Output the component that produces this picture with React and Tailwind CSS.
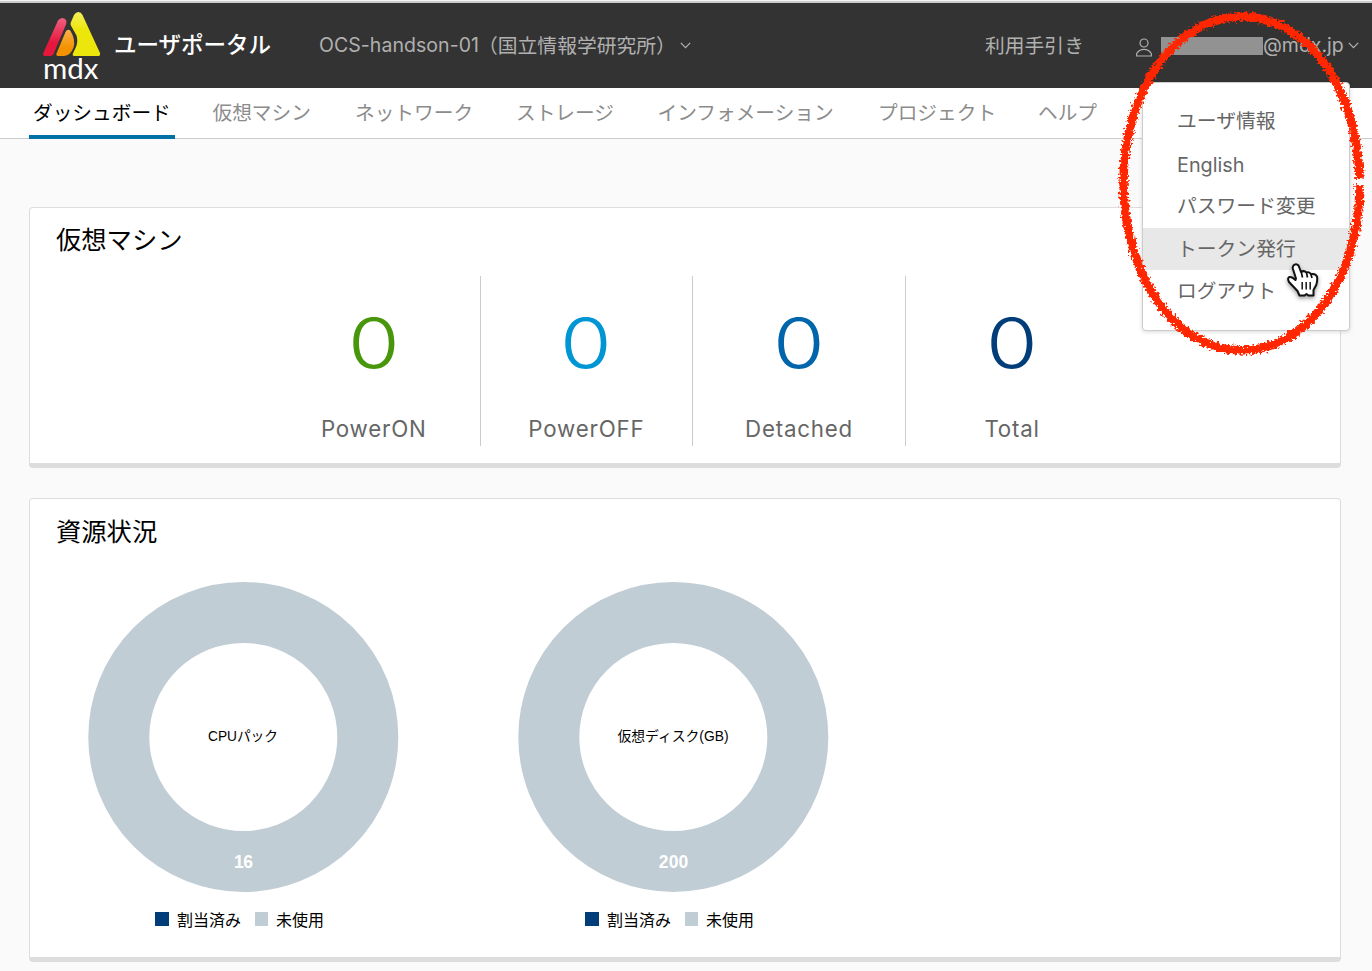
import React from "react";

const TABS = [
  { label: "仮想マシン", w: "w-[98.5px]" },
  { label: "ネットワーク", w: "w-[117px]" },
  { label: "ストレージ", w: "w-[97.5px]" },
  { label: "インフォメーション", w: "w-[176.5px]" },
  { label: "プロジェクト", w: "w-[116px]" },
  { label: "ヘルプ", w: "w-[59px]" },
];

const STATS = [
  { label: "PowerON", color: "text-[#48960c]" },
  { label: "PowerOFF", color: "text-[#0095d3]" },
  { label: "Detached", color: "text-[#0065ab]" },
  { label: "Total", color: "text-[#003d79]" },
];

const MENU = ["ユーザ情報", "English", "パスワード変更", "トークン発行", "ログアウト"];

function Logo() {
  return (
    <svg className="h-[85px] w-[60px] shrink-0" viewBox="0 3 60 85">
      <defs>
        <linearGradient id="lr" x1="0" y1="0" x2="0" y2="1">
          <stop offset="0" stopColor="#f0617f" />
          <stop offset="0.65" stopColor="#e6173d" />
        </linearGradient>
        <linearGradient id="lo" x1="0" y1="0" x2="0" y2="1">
          <stop offset="0" stopColor="#f8b04c" />
          <stop offset="0.7" stopColor="#f39200" />
        </linearGradient>
        <linearGradient id="ly" x1="0" y1="0" x2="0" y2="1">
          <stop offset="0" stopColor="#f4ee5c" />
          <stop offset="0.4" stopColor="#ede60c" />
        </linearGradient>
      </defs>
      <g transform="translate(0 3)">
        <path d="M16 17.500 Q18 14.800 20.500 15 Q25.500 15.800 24.200 21 L11.500 51 Q10.500 53 8.500 53 H3 Q.3 52.600 1.500 49.500 Z" fill="url(#lr)" />
        <path d="M23.500 29 Q25.500 25.500 28.300 27.600 Q34 37 31.500 44.500 Q28.500 52.500 22 53 H16 Q13.700 52.500 14.500 50.500 Z" fill="url(#lo)" />
        <path d="M32 12 Q34 9 36.300 9 Q39 9.200 40.500 12 L58 50 Q58.500 52.800 56.500 53 H32 Q30 52.800 30.800 50.800 L34 44 Q36.400 38.500 34.500 32.500 L28.900 22.500 Q28.300 21 28.800 19.500 Z" fill="url(#ly)" />
      </g>
      <text x="1" y="79" textLength="55.500" lengthAdjust="spacingAndGlyphs" className="fill-white font-['Lato',sans-serif] text-[29.5px]">mdx</text>
    </svg>
  );
}

function Chevron() {
  return (
    <svg className="mb-px h-[7px] w-[11px] shrink-0" viewBox="0 0 11 7" fill="none" stroke="#b0b0b0" strokeWidth="1.300">
      <path d="M.8 .9 5.500 5.600 10.200 .9" />
    </svg>
  );
}

function Donut({ title, value, titleWidth, valueWidth }) {
  return (
    <div className="flex w-[430px] flex-col items-center">
      <svg className="h-[312px] w-[312px]" viewBox="0 0 312 312">
        <circle cx="156.300" cy="156" r="124.500" fill="none" stroke="#c1cdd4" strokeWidth="61" />
        <text x="156" y="160" textAnchor="middle" textLength={titleWidth} lengthAdjust="spacingAndGlyphs" className="fill-black font-['Liberation_Sans','Noto_Sans_CJK_JP',sans-serif] text-[14px]">{title}</text>
        <text x="156.500" y="287" textAnchor="middle" textLength={valueWidth} className="fill-white font-['Liberation_Sans',sans-serif] text-[17.5px] font-bold">{value}</text>
      </svg>
      <div className="mt-[14px] flex h-6 items-center pr-[7px] font-['Noto_Sans_CJK_JP',sans-serif] text-[16px] text-black">
        <span className="mr-[8px] h-[14px] w-[14px] bg-[#003d79]" />
        <span className="mr-[14px] leading-6">割当済み</span>
        <span className="mr-2 h-[14px] w-[13px] bg-[#c1cdd4]" />
        <span className="leading-6">未使用</span>
      </div>
    </div>
  );
}

function HandCursor() {
  return (
    <svg className="absolute top-[260px] left-[1284px] h-[40px] w-[38px] drop-shadow-[0_2px_2px_rgba(0,0,0,0.4)]" viewBox="0 0 38 40">
      <path d="M9.500 5.500 Q12 2.800 14.500 5.500 L17 12 Q20 10 22.500 12.500 Q25.500 11.500 27 14.200 Q31 13 33 16.500 Q33.800 20 32.200 25 L29.500 30 V35.500 H24.500 L22.500 34 L20.500 35.500 H15.500 L13.500 31 L5 22 Q3 18 5.500 17 Q8 16.500 11.500 20 L12 18.500 L8.800 8.500 Q8.500 6.800 9.500 5.500 Z" fill="#fff" stroke="#111" strokeWidth="2" strokeLinejoin="round" />
      <path d="M17.300 12 18.500 17.500 M22.500 13 23.500 17.500 M27 14.500 28 18" stroke="#111" strokeWidth="1.700" />
      <path d="M18.200 22V29.500 M22.200 22V29.500 M26.200 22V29.500" stroke="#222" strokeWidth="1.600" />
    </svg>
  );
}

function Highlight() {
  return (
    <svg className="pointer-events-none absolute top-0 left-[1100px] h-[370px] w-[272px]" viewBox="1100 0 272 370">
      <defs>
        <filter id="crayon" x="-5%" y="-5%" width="110%" height="110%">
          <feTurbulence type="fractalNoise" baseFrequency="0.4" numOctaves="3" seed="4" result="n" />
          <feDisplacementMap in="SourceGraphic" in2="n" scale="8" xChannelSelector="R" yChannelSelector="G" result="d" />
          <feGaussianBlur in="d" stdDeviation="0.4" />
        </filter>
      </defs>
      <path d="M1359.500 179 C1357 85 1306 16.500 1241 16.500 C1176 16.500 1123.500 91 1123.500 182 C1123.500 276 1176 350.500 1241 350.500 C1306 350.500 1360 280 1359.500 185" fill="none" stroke="#ff2600" strokeWidth="8.500" filter="url(#crayon)" />
    </svg>
  );
}

export default function App() {
  return (
    <div className="relative flex h-[971px] w-[1372px] flex-col overflow-hidden bg-[#fafafa] font-['Lato','Noto_Sans_CJK_JP',sans-serif]">
      <div className="h-[3px] shrink-0 border-b-2 border-[#ccc] bg-[#f5f5f5]" />
      <header className="flex h-[85px] shrink-0 items-center bg-[#333] pl-[42px] text-[#b0b0b0]">
        <Logo />
        <div className="mb-[2px] ml-[12px] w-[158px] text-[22.5px] leading-8 font-medium whitespace-nowrap text-white">ユーザポータル</div>
        <div className="mb-[2px] ml-[47px] flex w-[361px] items-center text-[19.8px] leading-8 whitespace-nowrap">
          <span className="w-[159px] pt-px font-['Inter',sans-serif] text-[19.5px] tracking-[0.05px]">OCS-handson-01</span>
          <span>（国立情報学研究所）</span>
        </div>
        <Chevron />
        <div className="mb-[2px] ml-[294px] w-[151px] text-[19.8px] leading-8">利用手引き</div>
        <svg className="mt-[4px] h-[19px] w-[16px]" viewBox="0 0 16 19" fill="none" stroke="#b0b0b0" strokeWidth="1.200">
          <circle cx="8" cy="5" r="4" />
          <path d="M.7 18V15.500Q3 11.300 8 11.300T15.300 15.500V18Z" />
        </svg>
        <div className="ml-[9px] h-[18px] w-[102px] bg-[#929292]" />
        <div className="mb-px w-[85px] font-['Inter',sans-serif] text-[19.5px] leading-8 tracking-[0px]">@mdx.jp</div>
        <Chevron />
      </header>
      <nav className="flex h-[51px] shrink-0 border-b border-[#ccc] bg-white pl-[29px] text-[19.7px] leading-[50px] whitespace-nowrap text-[#8c8c8c]">
        <div className="mr-[37.5px] h-[51px] w-[146px] border-b-4 border-[#0072a3] pl-1 text-black">ダッシュボード</div>
        <div className="flex gap-[44px]">
          {TABS.map((t) => (
            <div key={t.label} className={t.w}>{t.label}</div>
          ))}
        </div>
      </nav>
      <main className="flex flex-col gap-[30px] pt-[68px] pr-[31px] pl-[29px]">
        <section className="flex h-[261px] flex-col rounded-[4px] border border-b-[5px] border-[#ddd] bg-white">
          <h2 className="pt-[13px] pl-[26px] text-[25.3px] leading-9 text-black">仮想マシン</h2>
          <div className="mt-[19px] ml-[238px] flex h-[170px]">
            {STATS.map((s, i) => (
              <div key={s.label} className={"flex w-[212.6px] flex-col items-center " + (i < 3 ? "border-r border-[#ccc]" : "")}>
                <div className={"mt-[31px] h-[72px] scale-x-[1.18] font-['Inter',sans-serif] text-[71px] leading-[72px] font-[340] " + s.color}>0</div>
                <div className="mt-[33px] font-['Inter',sans-serif] text-[22.3px] leading-[33px] tracking-[0.8px] text-[#666]">{s.label}</div>
              </div>
            ))}
          </div>
        </section>
        <section className="flex h-[464px] flex-col rounded-[4px] border border-b-[5px] border-[#ddd] bg-white">
          <h2 className="pt-[14px] pl-[26px] text-[25.3px] leading-9 text-black">資源状況</h2>
          <div className="mt-[32px] -ml-[2px] flex">
            <Donut title="CPUパック" value="16" titleWidth="70" valueWidth="19" />
            <Donut title="仮想ディスク(GB)" value="200" titleWidth="111" valueWidth="29.500" />
          </div>
        </section>
      </main>
      <div className="absolute top-[82px] left-[1142px] flex h-[249px] w-[208px] flex-col rounded-[4px] border border-[#ccc] bg-white pt-[19px] text-[19.8px] leading-[39px] whitespace-nowrap text-[#666] shadow-[0_1px_4px_rgba(0,0,0,0.15)]">
        {MENU.map((m, i) => (
          <div key={m} className={"h-[42px] pl-[34px] " + (i === 3 ? "bg-[#e8e8e8] leading-[41px] " : "") + (i === 4 ? "leading-[41px] " : "") + (i === 0 ? "leading-[36px] " : "") + (i === 1 ? "font-['Inter',sans-serif] leading-[42px]" : "")}>{m}</div>
        ))}
      </div>
      <HandCursor />
      <Highlight />
    </div>
  );
}
